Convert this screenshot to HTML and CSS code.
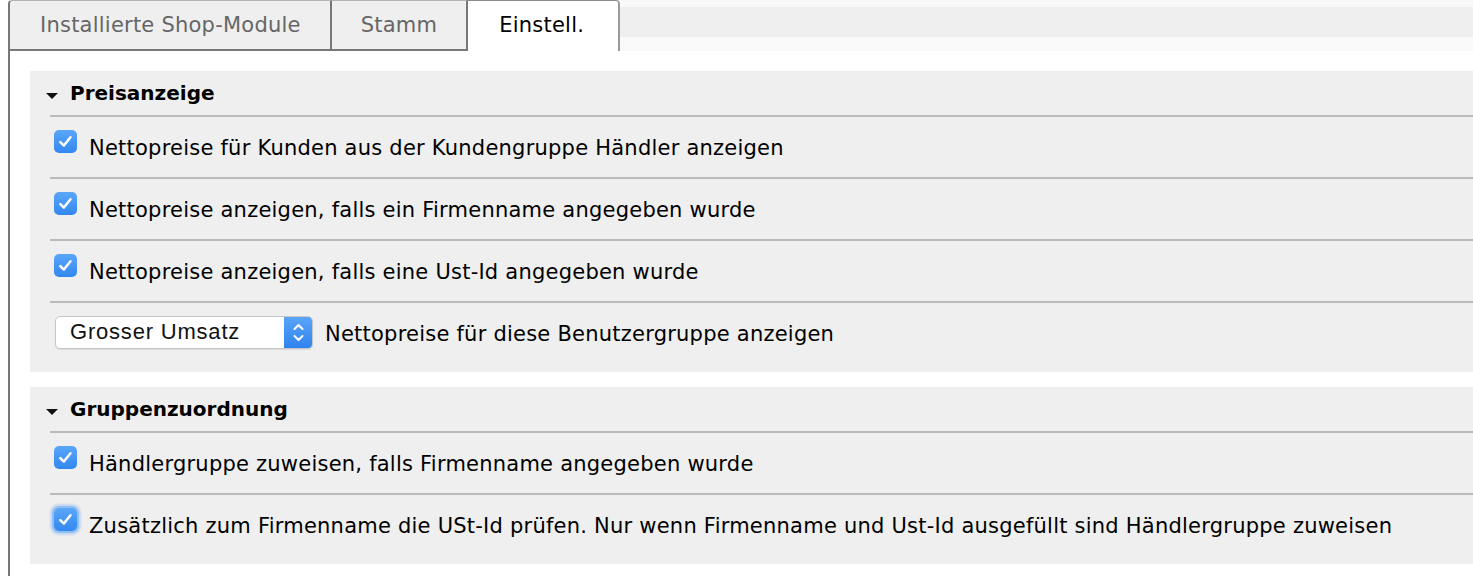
FILE: index.html
```html
<!DOCTYPE html>
<html lang="de">
<head>
<meta charset="utf-8">
<title>Einstellungen</title>
<link rel="stylesheet" href="styles.css">
</head>
<body>
<div class="page">
  <div class="tabbar">
    <div class="tab first">Installierte Shop-Module</div>
    <div class="tab">Stamm</div>
    <div class="tab active">Einstell.</div>
    <div class="tabfill"></div>
  </div>
  <div class="panel">
    <section class="group">
      <div class="group-head"><span class="caret"></span><span>Preisanzeige</span></div>
      <div class="row">
        <span class="cb"><svg viewBox="0 0 24 24" width="23" height="23"><path d="M6.6 12.6 L10.3 16.2 L17.2 7.6" fill="none" stroke="#fff" stroke-width="2.6" stroke-linecap="round" stroke-linejoin="round"/></svg></span>
        <span class="label">Nettopreise für Kunden aus der Kundengruppe Händler anzeigen</span>
      </div>
      <div class="row">
        <span class="cb"><svg viewBox="0 0 24 24" width="23" height="23"><path d="M6.6 12.6 L10.3 16.2 L17.2 7.6" fill="none" stroke="#fff" stroke-width="2.6" stroke-linecap="round" stroke-linejoin="round"/></svg></span>
        <span class="label">Nettopreise anzeigen, falls ein Firmenname angegeben wurde</span>
      </div>
      <div class="row">
        <span class="cb"><svg viewBox="0 0 24 24" width="23" height="23"><path d="M6.6 12.6 L10.3 16.2 L17.2 7.6" fill="none" stroke="#fff" stroke-width="2.6" stroke-linecap="round" stroke-linejoin="round"/></svg></span>
        <span class="label">Nettopreise anzeigen, falls eine Ust-Id angegeben wurde</span>
      </div>
      <div class="row">
        <div class="select">
          <span class="select-text">Grosser Umsatz</span>
          <span class="stepper"><svg viewBox="0 0 29 33" width="29" height="33"><path d="M10.5 13 L14.5 9 L18.5 13" fill="none" stroke="#fff" stroke-width="2" stroke-linecap="round" stroke-linejoin="round"/><path d="M10.5 20 L14.5 24 L18.5 20" fill="none" stroke="#fff" stroke-width="2" stroke-linecap="round" stroke-linejoin="round"/></svg></span>
        </div>
        <span class="label">Nettopreise für diese Benutzergruppe anzeigen</span>
      </div>
    </section>
    <section class="group">
      <div class="group-head"><span class="caret"></span><span>Gruppenzuordnung</span></div>
      <div class="row">
        <span class="cb"><svg viewBox="0 0 24 24" width="23" height="23"><path d="M6.6 12.6 L10.3 16.2 L17.2 7.6" fill="none" stroke="#fff" stroke-width="2.6" stroke-linecap="round" stroke-linejoin="round"/></svg></span>
        <span class="label">Händlergruppe zuweisen, falls Firmenname angegeben wurde</span>
      </div>
      <div class="row">
        <span class="cb focus"><svg viewBox="0 0 24 24" width="23" height="23"><path d="M6.6 12.6 L10.3 16.2 L17.2 7.6" fill="none" stroke="#fff" stroke-width="2.6" stroke-linecap="round" stroke-linejoin="round"/></svg></span>
        <span class="label">Zusätzlich zum Firmenname die USt-Id prüfen. Nur wenn Firmenname und Ust-Id ausgefüllt sind Händlergruppe zuweisen</span>
      </div>
    </section>
  </div>
</div>
</body>
</html>
```
FILE: styles.css
```css
html, body {
  margin: 0;
  padding: 0;
  background: #fff;
}
body {
  font-family: "DejaVu Sans", sans-serif;
  font-size: 21px;
  letter-spacing: 0.23px;
  color: #000;
}
.page {
  padding-left: 8px;
  height: 576px;
  overflow: hidden;
}
.tabbar {
  display: flex;
  height: 51px;
}
.tab {
  box-sizing: border-box;
  height: 51px;
  padding: 0 29px;
  display: flex;
  align-items: center;
  background: #efefef;
  color: #666;
  border: 2px solid #777;
  border-top: 1px solid #b5b5b5;
  border-left: none;
  white-space: nowrap;
}
.tab.first {
  border-left: 2px solid #777;
  border-top-left-radius: 4px;
  padding: 0 29px 0 30px;
}
.tab.active {
  background: #fff;
  color: #000;
  border-bottom: none;
  padding: 0 34px 2px 31px;
  border-top-color: #8a8a8a;
  border-right-color: #9a9a9a;
  border-top-right-radius: 4px;
}
.tabfill {
  flex: 1;
  box-sizing: border-box;
  height: 51px;
  background: #efefef;
  border-top: 7px solid #f9f9f9;
  border-bottom: 14px solid #f9f9f9;
}
.panel {
  border-left: 2px solid #777;
  padding: 20px 0 0 20px;
  display: flex;
  flex-direction: column;
  gap: 15px;
  height: 600px;
}
.group {
  background: #efefef;
  padding: 0 0 9px 20px;
}
.group-head {
  height: 44px;
  display: flex;
  align-items: center;
  gap: 12px;
  margin-left: -4px;
  font-weight: bold;
  font-size: 20px;
  letter-spacing: 0;
}
.caret {
  width: 0;
  height: 0;
  border-left: 6px solid transparent;
  border-right: 6px solid transparent;
  border-top: 6px solid #111;
  margin-top: 5px;
}
.row {
  border-top: 2px solid #bbb;
  height: 60px;
  display: flex;
  align-items: center;
  gap: 12px;
  padding-left: 4px;
  white-space: nowrap;
}
.cb {
  flex: none;
  width: 23px;
  height: 23px;
  border-radius: 5px;
  background: linear-gradient(#5aa6f9, #3387f0);
  display: flex;
  margin-bottom: 11px;
}
.cb.focus {
  box-shadow: 0 0 0 2px #8fbff3, 0 0 2px 4px rgba(120, 170, 240, 0.35);
}
.label {
  line-height: 24px;
  margin-top: 2px;
}
.select {
  flex: none;
  box-sizing: border-box;
  width: 258px;
  height: 33px;
  margin-left: 1px;
  margin-bottom: 2px;
  display: flex;
  background: #fff;
  border: 1px solid #c6c6c6;
  border-radius: 5px;
  box-shadow: 0 1px 1px rgba(0, 0, 0, 0.08);
  overflow: hidden;
}
.select-text {
  flex: 1;
  display: flex;
  align-items: center;
  padding-left: 14px;
  font-family: "Liberation Sans", Arial, sans-serif;
  font-size: 22px;
  letter-spacing: 0.8px;
  color: #111;
}
.stepper {
  flex: none;
  width: 29px;
  height: 33px;
  margin: -1px -1px -1px 0;
  background: linear-gradient(#5aa6f9, #2f82ee);
  display: flex;
}
```
